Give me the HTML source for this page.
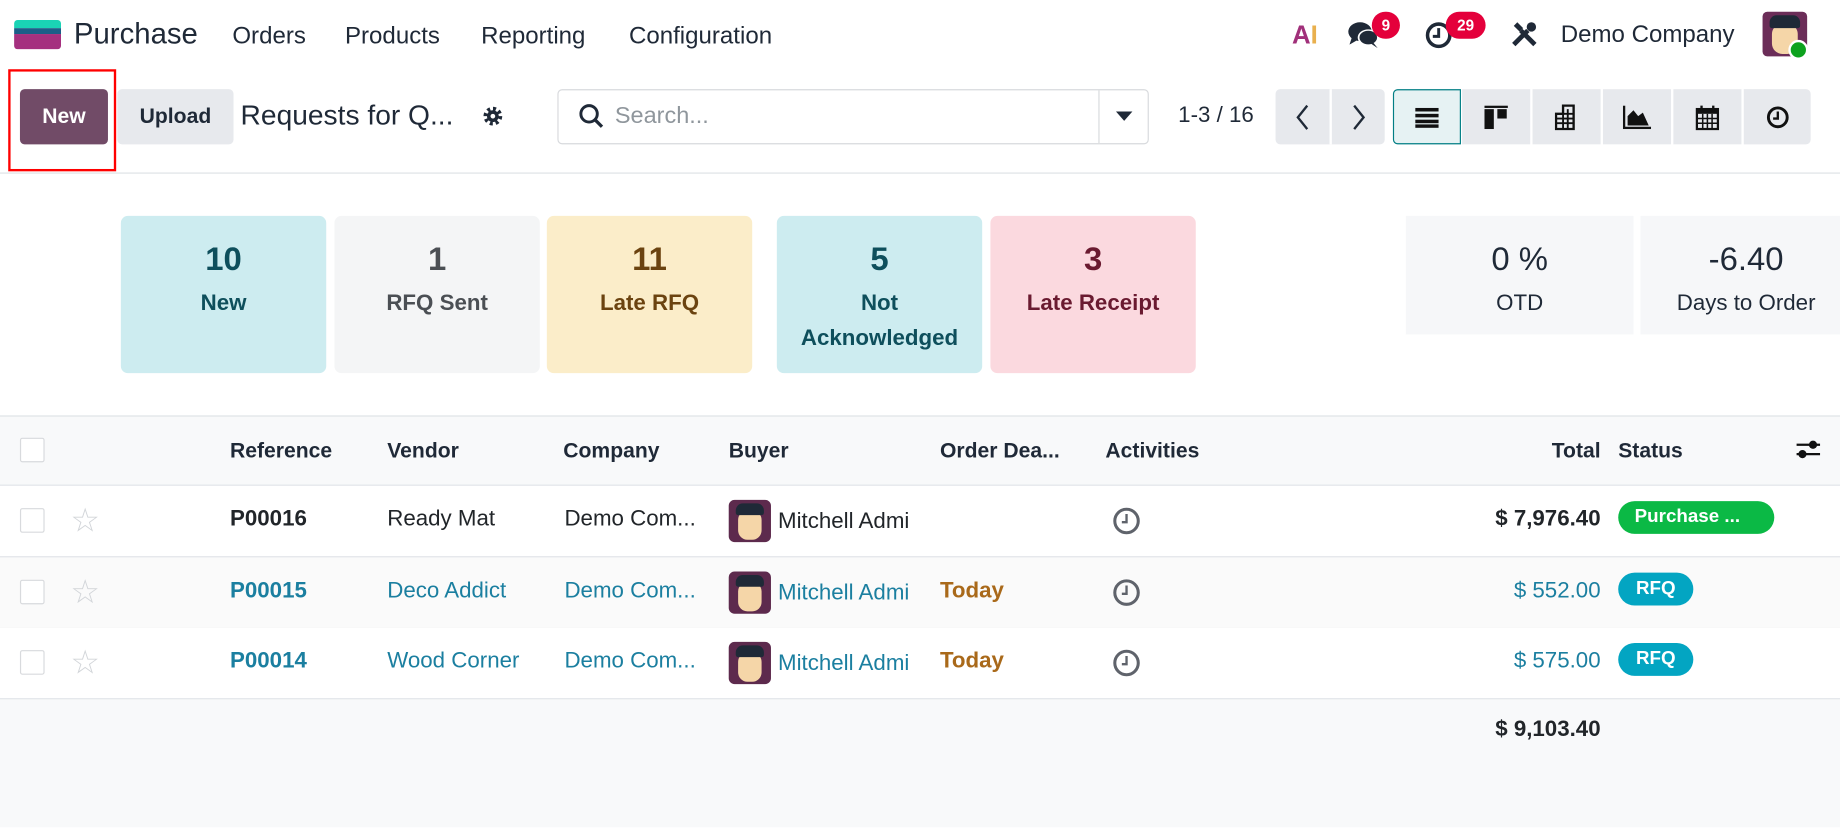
<!DOCTYPE html>
<html><head><meta charset="utf-8"><style>
*{box-sizing:border-box;margin:0;padding:0}
html,body{width:1840px;height:829px;overflow:hidden;background:#fff}
#w{position:absolute;left:0;top:0;width:1568px;height:705px;transform:scale(1.17347);transform-origin:0 0;font-family:"Liberation Sans",sans-serif;color:#212529}
.a{position:absolute;white-space:nowrap}
.nav{font-size:20.5px;color:#1f2937;top:19px}
.btn{position:absolute;top:76px;height:47px;border-radius:4px;display:flex;align-items:center;justify-content:center;font-weight:bold;font-size:18px}
.vb{position:absolute;top:76px;height:47px;width:58px;background:#e7e9ed;display:flex;align-items:center;justify-content:center}
.card{position:absolute;top:184px;height:134px;width:175px;border-radius:6px;text-align:center}
.card .n{font-size:28px;font-weight:bold;margin-top:20px;line-height:34px}
.card .l{font-size:19px;font-weight:bold;margin-top:6px;line-height:30px}
.th{position:absolute;top:374px;font-size:18px;font-weight:bold;color:#1f2937}
.row{position:absolute;left:0;width:1568px;height:61px;border-bottom:1px solid #dee2e6}
.cb{position:absolute;left:17px;width:21px;height:21px;border:1px solid #d8dadd;border-radius:2px;background:#fff}
.c{position:absolute;font-size:19px;top:18px}
.lk{color:#1b7fa0}
.av{position:absolute;left:621px;top:12px;width:36px;height:36px;border-radius:5px;background:#5d2a4d;overflow:hidden}
.av:before{content:"";position:absolute;left:8px;top:9px;width:20px;height:25px;background:#f5d6a8;border-radius:8px}
.av:after{content:"";position:absolute;left:6px;top:3px;width:24px;height:10px;background:#1f2937;border-radius:6px 6px 2px 2px}
.badge{position:absolute;border-radius:14px;color:#fff;font-size:16px;font-weight:bold;padding:0 12px;height:28px;line-height:28px;top:13px;left:1379px}
</style></head><body><div id="w">
<div class="a" style="left:12px;top:17px;width:40px;height:25px;border-radius:3px;overflow:hidden">
<div style="height:7px;background:#1ad3b5"></div><div style="height:5px;background:#1b5e88"></div><div style="height:13px;background:#a5307f"></div></div>
<div class="a" style="left:63px;top:15px;font-size:25px;color:#1f2937">Purchase</div>
<div class="a nav" style="left:198px">Orders</div>
<div class="a nav" style="left:294px">Products</div>
<div class="a nav" style="left:410px">Reporting</div>
<div class="a nav" style="left:536px">Configuration</div>
<div class="a" style="left:1101px;top:17px;font-size:22px;font-weight:bold"><span style="color:#a1307a">A</span><span style="color:#e9b04e">I</span></div>
<svg class="a" style="left:1148px;top:17px" width="30" height="26" viewBox="0 0 30 26"><ellipse cx="11" cy="10" rx="10" ry="8" fill="#1f2937"/><path d="M4 15 L2 21 L9 17Z" fill="#1f2937"/><ellipse cx="18" cy="15" rx="9" ry="7" fill="#fff"/><ellipse cx="18" cy="15" rx="7.5" ry="5.8" fill="#1f2937"/><path d="M22 19 L26 24 L20 20Z" fill="#1f2937"/></svg>
<div class="a" style="left:1169px;top:10px;width:24px;height:23px;border-radius:12px;background:#e4003b;color:#fff;font-size:13px;font-weight:bold;text-align:center;line-height:23px">9</div>
<svg class="a" style="left:1214px;top:18px" width="24" height="24" viewBox="0 0 24 24"><circle cx="12" cy="12" r="9.5" fill="none" stroke="#1f2937" stroke-width="3"/><path d="M12 6v7H7" fill="none" stroke="#1f2937" stroke-width="2.5"/></svg>
<div class="a" style="left:1232px;top:10px;width:34px;height:23px;border-radius:12px;background:#e4003b;color:#fff;font-size:13px;font-weight:bold;text-align:center;line-height:23px">29</div>
<svg class="a" style="left:1287px;top:17px" width="24" height="24" viewBox="0 0 24 24"><path d="M3 21L15 9M9 9L21 21" stroke="#1f2937" stroke-width="4"/><path d="M3 5l3-3 5 5-3 3z" fill="#1f2937"/><circle cx="18" cy="6" r="4" fill="#1f2937"/></svg>
<div class="a" style="left:1330px;top:18px;font-size:20.5px;color:#1f2937">Demo Company</div>
<div class="a" style="left:1502px;top:10px;width:38px;height:38px;border-radius:4px;background:#6b2d58;overflow:hidden"><div style="position:absolute;left:8px;top:10px;width:22px;height:26px;background:#f5d6a8;border-radius:9px"></div><div style="position:absolute;left:6px;top:3px;width:26px;height:11px;background:#1f2937;border-radius:6px 6px 2px 2px"></div></div>
<div class="a" style="left:1524px;top:34px;width:17px;height:17px;border-radius:50%;background:#0da21e;border:2px solid #fff"></div>
<div class="a" style="left:7px;top:59px;width:92px;height:87px;border:2px solid #f00"></div>
<div class="btn" style="left:17px;width:75px;background:#714b67;color:#fff">New</div>
<div class="btn" style="left:100px;width:99px;background:#e7e9ed;color:#1f2937">Upload</div>
<div class="a" style="left:205px;top:85px;font-size:24px;color:#1f2937">Requests for Q...</div>
<svg class="a" style="left:411px;top:90px" width="18" height="18" viewBox="0 0 18 18"><circle cx="9" cy="9" r="6" fill="none" stroke="#1f2937" stroke-width="4" stroke-dasharray="2.4 2.3"/><circle cx="9" cy="9" r="5" fill="#1f2937"/><circle cx="9" cy="9" r="2" fill="#fff"/></svg>
<div class="a" style="left:475px;top:76px;width:504px;height:47px;border:1px solid #d8dadd;border-radius:4px"></div>
<div class="a" style="left:936px;top:77px;width:1px;height:45px;background:#d8dadd"></div>
<svg class="a" style="left:493px;top:88px" width="22" height="22" viewBox="0 0 22 22"><circle cx="9" cy="9" r="7" fill="none" stroke="#1f2937" stroke-width="2.5"/><path d="M14 14l6 6" stroke="#1f2937" stroke-width="2.8"/></svg>
<div class="a" style="left:524px;top:88px;font-size:20px;color:#8f969c">Search...</div>
<div class="a" style="left:951px;top:95px;width:0;height:0;border-left:7px solid transparent;border-right:7px solid transparent;border-top:8px solid #1f2937"></div>
<div class="a" style="left:1004px;top:88px;font-size:19px;color:#1f2937">1-3 / 16</div>
<div class="a" style="left:1087px;top:76px;width:93px;height:47px;background:#e7e9ed;border-radius:4px"></div>
<div class="a" style="left:1133px;top:76px;width:2px;height:47px;background:#fff"></div>
<svg class="a" style="left:1102px;top:88px" width="16" height="24" viewBox="0 0 16 24"><path d="M12 2L4 12l8 10" fill="none" stroke="#1f2937" stroke-width="2"/></svg>
<svg class="a" style="left:1150px;top:88px" width="16" height="24" viewBox="0 0 16 24"><path d="M4 2l8 10-8 10" fill="none" stroke="#1f2937" stroke-width="2"/></svg>
<div class="vb" style="left:1187px;background:#e6f2f3;border:1px solid #017e84;border-radius:4px 0 0 4px"><svg width="20" height="18"><rect y="1" width="20" height="3" fill="#111"/><rect y="6" width="20" height="3" fill="#111"/><rect y="11" width="20" height="3" fill="#111"/><rect y="15" width="20" height="3" fill="#111"/></svg></div>
<div class="vb" style="left:1246px"><svg width="20" height="20"><rect y="0" width="20" height="2" fill="#111"/><rect y="3" width="8" height="17" fill="#111"/><rect x="11" y="3" width="8" height="8" fill="#111"/></svg></div>
<div class="vb" style="left:1306px"><svg width="20" height="22" viewBox="0 0 20 22"><path d="M7 1h9v20H1V8h6z" fill="none" stroke="#111" stroke-width="2"/><path d="M1 12h15M1 16h15M7 8h9M7 4v17M11 4v17" stroke="#111" stroke-width="1.6"/></svg></div>
<div class="vb" style="left:1366px"><svg width="24" height="20"><path d="M1 0v19h23" fill="none" stroke="#111" stroke-width="2"/><path d="M4 17V9l5-5 4 5 4-3 5 11z" fill="#111"/></svg></div>
<div class="vb" style="left:1426px"><svg width="20" height="22" viewBox="0 0 20 22"><rect x="1" y="4" width="18" height="17" fill="none" stroke="#111" stroke-width="2"/><rect x="1" y="4" width="18" height="4" fill="#111"/><path d="M5 1v5M15 1v5" stroke="#111" stroke-width="2"/><path d="M1 12h18M1 16h18M6 8v13M10 8v13M14 8v13" stroke="#111" stroke-width="1.3"/></svg></div>
<div class="vb" style="left:1486px;width:57px;border-radius:0 4px 4px 0"><svg width="20" height="20"><circle cx="10" cy="10" r="8" fill="none" stroke="#111" stroke-width="2.5"/><path d="M10 5v6H6" fill="none" stroke="#111" stroke-width="2"/></svg></div>
<div class="a" style="left:0;top:147px;width:1568px;height:1px;background:#dee2e6"></div>
<div class="card" style="left:103px;background:#cdecf0;color:#0e4f5c"><div class="n">10</div><div class="l">New</div></div>
<div class="card" style="left:285px;background:#f4f5f6;color:#4b4f54"><div class="n">1</div><div class="l">RFQ Sent</div></div>
<div class="card" style="left:466px;background:#fbedc9;color:#6b4310"><div class="n">11</div><div class="l">Late RFQ</div></div>
<div class="card" style="left:662px;background:#cdecf0;color:#0e4f5c"><div class="n">5</div><div class="l">Not<br>Acknowledged</div></div>
<div class="card" style="left:844px;background:#fbd9df;color:#6a1a30"><div class="n">3</div><div class="l">Late Receipt</div></div>
<div class="card" style="left:1198px;width:194px;height:101px;background:#f6f7f9;color:#1f2937;border-radius:0"><div class="n" style="font-weight:normal">0 %</div><div class="l" style="font-weight:normal">OTD</div></div>
<div class="card" style="left:1398px;width:180px;height:101px;background:#f6f7f9;color:#1f2937;border-radius:0"><div class="n" style="font-weight:normal">-6.40</div><div class="l" style="font-weight:normal">Days to Order</div></div>
<div class="a" style="left:0;top:354px;width:1568px;height:60px;background:#f8f9fa;border-top:1px solid #dee2e6;border-bottom:1px solid #dee2e6"></div>
<div class="cb" style="top:373px"></div>
<div class="th" style="left:196px">Reference</div>
<div class="th" style="left:330px">Vendor</div>
<div class="th" style="left:480px">Company</div>
<div class="th" style="left:621px">Buyer</div>
<div class="th" style="left:801px">Order Dea...</div>
<div class="th" style="left:942px">Activities</div>
<div class="th" style="right:204px">Total</div>
<div class="th" style="left:1379px">Status</div>
<svg class="a" style="left:1530px;top:373px" width="22" height="20"><path d="M1 6h20M1 14h20" stroke="#111" stroke-width="2"/><circle cx="15" cy="6" r="3.5" fill="#111"/><circle cx="6" cy="14" r="3.5" fill="#111"/></svg>

<div class="row" style="top:414px;background:#fff">
<div class="cb" style="top:19px"></div><div class="c" style="left:60px;top:13px;font-size:28px;color:#d2d5d9">☆</div>
<div class="c" style="left:196px;font-weight:bold">P00016</div>
<div class="c" style="left:330px">Ready Mat</div>
<div class="c" style="left:481px">Demo Com...</div>
<div class="av"></div><div class="c" style="left:663px;top:20px">Mitchell Admi</div>
<svg class="a" style="left:948px;top:18px" width="24" height="24"><circle cx="12" cy="12" r="10" fill="none" stroke="#5f636b" stroke-width="2.6"/><path d="M12 6v7H8" fill="none" stroke="#5f636b" stroke-width="2"/></svg>
<div class="c" style="right:204px;font-weight:bold">$ 7,976.40</div>
<div class="badge" style="background:#0bb945;padding:0 14px;width:133px">Purchase ...</div>
</div>
<div class="row" style="top:475px;background:#fafafa">
<div class="cb" style="top:19px"></div><div class="c" style="left:60px;top:13px;font-size:28px;color:#d2d5d9">☆</div>
<div class="c lk" style="left:196px;font-weight:bold">P00015</div>
<div class="c lk" style="left:330px">Deco Addict</div>
<div class="c lk" style="left:481px">Demo Com...</div>
<div class="av"></div><div class="c lk" style="left:663px;top:20px">Mitchell Admi</div>
<div class="c" style="left:801px;font-weight:bold;color:#a9691a">Today</div>
<svg class="a" style="left:948px;top:18px" width="24" height="24"><circle cx="12" cy="12" r="10" fill="none" stroke="#5f636b" stroke-width="2.6"/><path d="M12 6v7H8" fill="none" stroke="#5f636b" stroke-width="2"/></svg>
<div class="c lk" style="right:204px">$ 552.00</div>
<div class="badge" style="background:#03a5c2;width:64px;text-align:center">RFQ</div>
</div>
<div class="row" style="top:535px;background:#fff">
<div class="cb" style="top:19px"></div><div class="c" style="left:60px;top:13px;font-size:28px;color:#d2d5d9">☆</div>
<div class="c lk" style="left:196px;font-weight:bold">P00014</div>
<div class="c lk" style="left:330px">Wood Corner</div>
<div class="c lk" style="left:481px">Demo Com...</div>
<div class="av"></div><div class="c lk" style="left:663px;top:20px">Mitchell Admi</div>
<div class="c" style="left:801px;font-weight:bold;color:#a9691a">Today</div>
<svg class="a" style="left:948px;top:18px" width="24" height="24"><circle cx="12" cy="12" r="10" fill="none" stroke="#5f636b" stroke-width="2.6"/><path d="M12 6v7H8" fill="none" stroke="#5f636b" stroke-width="2"/></svg>
<div class="c lk" style="right:204px">$ 575.00</div>
<div class="badge" style="background:#03a5c2;width:64px;text-align:center">RFQ</div>
</div>
<div class="a" style="left:0;top:596px;width:1568px;height:109px;background:#f8f9fa"></div>
<div class="a" style="right:204px;top:611px;font-size:19px;font-weight:bold">$ 9,103.40</div>
</div></body></html>
